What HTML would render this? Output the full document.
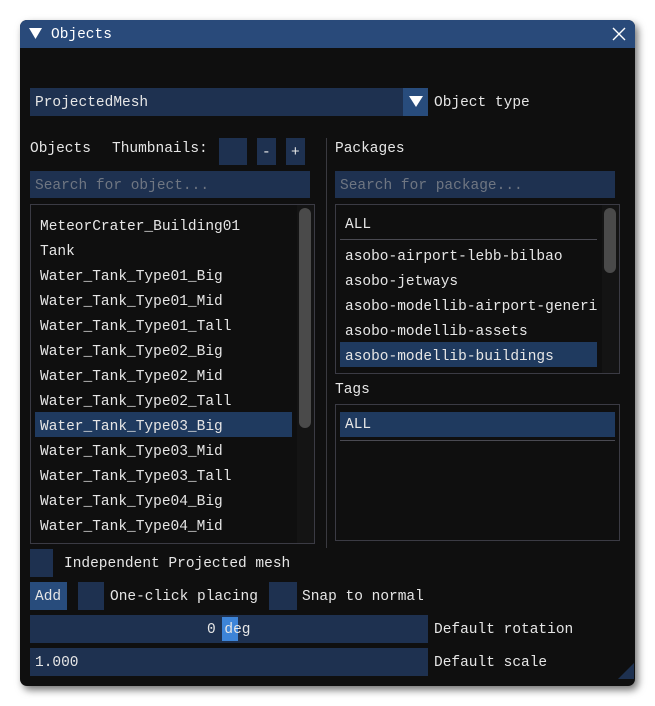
<!DOCTYPE html>
<html><head><style>
*{margin:0;padding:0;box-sizing:border-box}
body{width:655px;height:706px;background:#fff;position:relative;overflow:hidden;font-family:"Liberation Mono","DejaVu Sans Mono",monospace;font-size:14.5px;color:#e6e6e6}
.a{position:absolute}
.win{left:20px;top:20px;width:615px;height:666px;background:#0f0f0f;border-radius:7px;box-shadow:3px 4px 8px rgba(0,0,0,.55);overflow:hidden}
.title{left:0;top:0;width:615px;height:28px;background:#294a7a}
.f{background:#1e3150}
.t{line-height:18px;white-space:pre}
.box{border:1px solid #3b3b44}
.sel{background:#1f3a5f}
.ph{color:#6f7682}
</style></head><body>
<div class="a win">
 <div class="a title"></div>
</div>
<svg class="a" style="left:29px;top:28px" width="13" height="12"><polygon points="0,0 13,0 6.5,11" fill="#fff"/></svg>
<div class="a t" style="left:51px;top:26px;color:#fff">Objects</div>
<svg class="a" style="left:612px;top:27px" width="14" height="14"><path d="M1 1L13 13M13 1L1 13" stroke="#fff" stroke-width="1.4"/></svg>

<div class="a f" style="left:30px;top:88px;width:373px;height:28px"></div>
<div class="a" style="left:403px;top:88px;width:25px;height:28px;background:#284c7c"></div>
<svg class="a" style="left:409px;top:96px" width="14" height="12"><polygon points="0,0 14,0 7,11" fill="#fff"/></svg>
<div class="a t" style="left:35px;top:94px">ProjectedMesh</div>
<div class="a t" style="left:434px;top:94px">Object type</div>

<div class="a t" style="left:30px;top:140px">Objects</div>
<div class="a t" style="left:112px;top:140px">Thumbnails:</div>
<div class="a f" style="left:219px;top:138px;width:28px;height:27px"></div>
<div class="a f" style="left:257px;top:138px;width:19px;height:27px"></div>
<div class="a t" style="left:262px;top:144px">-</div>
<div class="a f" style="left:286px;top:138px;width:19px;height:27px"></div>
<div class="a t" style="left:291px;top:144px">+</div>
<div class="a f" style="left:30px;top:171px;width:280px;height:27px"></div>
<div class="a t ph" style="left:35px;top:177px">Search for object...</div>

<div class="a box" style="left:30px;top:204px;width:285px;height:340px"></div>
<div class="a" style="left:297px;top:205px;width:17px;height:338px;background:#141414"></div>
<div class="a" style="left:299px;top:208px;width:12px;height:220px;background:#4a4a4a;border-radius:6px"></div>
<div class="a sel" style="left:35px;top:412px;width:257px;height:25px"></div>
<div class="a t" style="left:40px;top:215px;line-height:25px">MeteorCrater_Building01
Tank
Water_Tank_Type01_Big
Water_Tank_Type01_Mid
Water_Tank_Type01_Tall
Water_Tank_Type02_Big
Water_Tank_Type02_Mid
Water_Tank_Type02_Tall
Water_Tank_Type03_Big
Water_Tank_Type03_Mid
Water_Tank_Type03_Tall
Water_Tank_Type04_Big
Water_Tank_Type04_Mid</div>

<div class="a" style="left:326px;top:138px;width:1px;height:410px;background:#3a3a40"></div>

<div class="a t" style="left:335px;top:140px">Packages</div>
<div class="a f" style="left:335px;top:171px;width:280px;height:27px"></div>
<div class="a t ph" style="left:340px;top:177px">Search for package...</div>
<div class="a box" style="left:335px;top:204px;width:285px;height:170px"></div>
<div class="a" style="left:602px;top:205px;width:17px;height:168px;background:#141414"></div>
<div class="a" style="left:604px;top:208px;width:12px;height:65px;background:#4a4a4a;border-radius:6px"></div>
<div class="a t" style="left:345px;top:216px">ALL</div>
<div class="a" style="left:340px;top:239px;width:257px;height:1px;background:#4a4a52"></div>
<div class="a sel" style="left:340px;top:342px;width:257px;height:25px"></div>
<div class="a t" style="left:345px;top:245px;line-height:25px;width:252px;overflow:hidden">asobo-airport-lebb-bilbao
asobo-jetways
asobo-modellib-airport-generic
asobo-modellib-assets
asobo-modellib-buildings</div>

<div class="a t" style="left:335px;top:381px">Tags</div>
<div class="a box" style="left:335px;top:404px;width:285px;height:137px"></div>
<div class="a sel" style="left:340px;top:412px;width:275px;height:25px"></div>
<div class="a" style="left:340px;top:440px;width:275px;height:1px;background:#4a4a52"></div>
<div class="a t" style="left:345px;top:416px">ALL</div>

<div class="a f" style="left:30px;top:549px;width:23px;height:28px"></div>
<div class="a t" style="left:64px;top:555px">Independent Projected mesh</div>
<div class="a" style="left:30px;top:582px;width:37px;height:28px;background:#284c7c"></div>
<div class="a t" style="left:35px;top:588px">Add</div>
<div class="a f" style="left:78px;top:582px;width:26px;height:28px"></div>
<div class="a t" style="left:110px;top:588px">One-click placing</div>
<div class="a f" style="left:269px;top:582px;width:28px;height:28px"></div>
<div class="a t" style="left:302px;top:588px">Snap to normal</div>

<div class="a f" style="left:30px;top:615px;width:398px;height:28px"></div>
<div class="a" style="left:222px;top:617px;width:16px;height:24px;background:#3d84d8"></div>
<div class="a t" style="left:207px;top:621px">0 deg</div>
<div class="a t" style="left:434px;top:621px">Default rotation</div>
<div class="a f" style="left:30px;top:648px;width:398px;height:28px"></div>
<div class="a t" style="left:35px;top:654px">1.000</div>
<div class="a t" style="left:434px;top:654px">Default scale</div>
<svg class="a" style="left:618px;top:663px" width="16" height="16"><polygon points="16,0 16,16 0,16" fill="#1e3150"/></svg>
</body></html>
